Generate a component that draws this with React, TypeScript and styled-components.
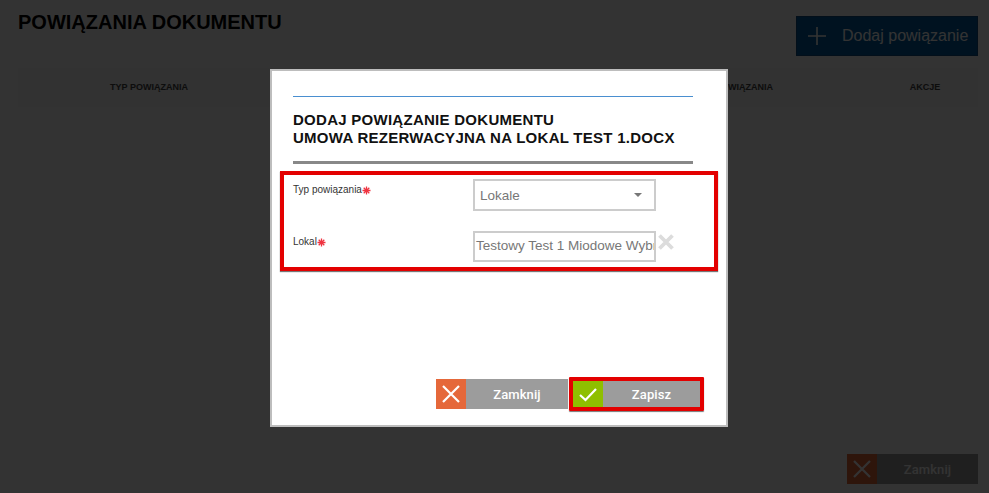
import React from "react";
import styled, { createGlobalStyle } from "styled-components";

const Global = createGlobalStyle`
  html, body { margin: 0; padding: 0; height: 100%; background: #fff; overflow: hidden; }
  #root { height: 100%; }
  * { box-sizing: border-box; }
  body { font-family: "Liberation Sans", Arial, sans-serif; }
`;

const Page = styled.div`
  height: 493px;
  padding: 16px 11px 0 18px;
  display: flex;
  flex-direction: column;
`;
const Header = styled.div`
  display: flex;
  justify-content: space-between;
  align-items: flex-start;
  height: 52px;
`;
const PageTitle = styled.h1`
  margin: 0;
  font-size: 20px;
  line-height: 12px;
  font-weight: 700;
  color: #000;
`;
const AddButton = styled.button`
  width: 182px;
  height: 40px;
  border: 1px solid #0f4d80;
  background: #005c9f;
  color: #fff;
  display: flex;
  align-items: center;
  gap: 15px;
  padding: 0 0 0 10px;
  font-family: inherit;
  font-size: 16px;
`;
const TableHead = styled.div`
  display: grid;
  grid-template-columns: 262px 493px 1fr 106px;
  align-items: center;
  height: 39px;
  background: #f7f7f7;
  padding-bottom: 1px;
`;
const HeadCell = styled.div<{ $align?: string }>`
  font-size: 9px;
  font-weight: 700;
  color: #444;
  text-align: ${(p) => p.$align ?? "center"};
`;
const Footer = styled.div`
  margin-top: auto;
  display: flex;
  justify-content: flex-end;
  padding-bottom: 9px;
`;
const Overlay = styled.div`
  position: fixed;
  inset: 0;
  background: rgba(0, 0, 0, 0.8);
  padding: 69px 0 0 270px;
`;
const Dialog = styled.div`
  width: 458px;
  height: 358px;
  background: #fff;
  border: 2px solid #bdbdbd;
  display: flex;
  flex-direction: column;
  padding: 25px 33px 0 21px;
`;
const BlueRule = styled.div`
  height: 1px;
  background: #4a8fd0;
`;
const DialogTitle = styled.h2`
  margin: 14px 0 0;
  font-size: 15px;
  line-height: 18px;
  font-weight: 700;
  color: #111;
  letter-spacing: 0.27px;
`;
const GreyRule = styled.div`
  height: 3px;
  margin-top: 14px;
  background: #888;
`;
const Highlight = styled.div`
  margin: 7px -25px 0 -13px;
  height: 100px;
  border: 4px solid #e30000;
  box-shadow: 0 1px 1px #777;
  padding: 4px 0 0 9px;
  display: flex;
  flex-direction: column;
  gap: 20px;
`;
const FormRow = styled.div`
  display: grid;
  grid-template-columns: 180px 183px auto;
  align-items: start;
`;
const Label = styled.label`
  font-size: 10px;
  line-height: 12px;
  margin-top: 5px;
  color: #333;
  display: flex;
  align-items: center;
`;
const Star = styled.svg`
  width: 9px;
  height: 9px;
`;
const SelectBox = styled.div`
  height: 32px;
  border: 2px solid #ccc;
  display: flex;
  align-items: center;
  justify-content: space-between;
  padding: 0 12px 0 5px;
  font-size: 13.5px;
  color: #777;
`;
const Caret = styled.span`
  width: 0;
  height: 0;
  border-left: 4px solid transparent;
  border-right: 4px solid transparent;
  border-top: 4px solid #777;
`;
const InputBox = styled.div`
  height: 31px;
  border: 2px solid #ccc;
  padding: 0 0 0 1px;
  font-size: 13.5px;
  line-height: 26px;
  color: #777;
  white-space: nowrap;
  overflow: hidden;
`;
const ClearIcon = styled.svg`
  width: 18px;
  height: 18px;
  margin: 2px 0 0 1px;
`;
const Actions = styled.div`
  margin-top: auto;
  margin-bottom: 14px;
  display: flex;
  justify-content: flex-end;
  align-items: center;
  margin-right: -11px;
  gap: 1px;
`;
const ActionButton = styled.button<{ $w: number; $h?: number }>`
  width: ${(p) => p.$w}px;
  height: ${(p) => p.$h ?? 30}px;
  padding: 0;
  border: 0;
  background: #9c9c9c;
  display: flex;
  align-items: stretch;
  color: #fff;
  font-family: Roboto, "Liberation Sans", sans-serif;
  font-size: 13px;
  font-weight: 500;
  letter-spacing: 0.1px;
`;
const IconTile = styled.span<{ $bg: string }>`
  width: 30px;
  flex: none;
  background: ${(p) => p.$bg};
  display: flex;
  align-items: center;
  justify-content: center;
`;
const ButtonLabel = styled.span`
  flex: 1;
  align-self: center;
  text-align: center;
`;
const RedFrame = styled.div`
  border: 4px solid #e30000;
  box-shadow: 0 1px 1px #777;
  border-radius: 1px;
  display: flex;
`;

const CloseGlyph = () => (
  <svg width="20" height="20" viewBox="0 0 20 20" fill="none" stroke="#fff" strokeWidth="2.2">
    <path d="M2 2 L18 18 M18 2 L2 18" />
  </svg>
);
const CheckGlyph = () => (
  <svg width="20" height="16" viewBox="0 0 20 16" fill="none" stroke="#fff" strokeWidth="2.2">
    <path d="M2 9 L7.5 14 L18 3" />
  </svg>
);
const RequiredStar = () => (
  <Star viewBox="0 0 9 9" fill="none" stroke="#ef3340" strokeWidth="1.3">
    <path d="M4.5 0.5 V8.5 M0.5 4.5 H8.5 M1.7 1.7 L7.3 7.3 M7.3 1.7 L1.7 7.3" />
  </Star>
);

export default function App() {
  return (
    <>
      <Global />
      <Page>
        <Header>
          <PageTitle>POWIĄZANIA DOKUMENTU</PageTitle>
          <AddButton>
            <svg width="20" height="20" viewBox="0 0 20 20" stroke="#fff" strokeWidth="1.6" fill="none">
              <path d="M10 1 V19 M1 10 H19" />
            </svg>
            Dodaj powiązanie
          </AddButton>
        </Header>
        <TableHead>
          <HeadCell>TYP POWIĄZANIA</HeadCell>
          <HeadCell $align="right">NAZWA POWIĄZANIA</HeadCell>
          <HeadCell />
          <HeadCell>AKCJE</HeadCell>
        </TableHead>
        <Footer>
          <ActionButton $w={131}>
            <IconTile $bg="#e5683a"><CloseGlyph /></IconTile>
            <ButtonLabel>Zamknij</ButtonLabel>
          </ActionButton>
        </Footer>
      </Page>
      <Overlay>
        <Dialog>
          <BlueRule />
          <DialogTitle>
            DODAJ POWIĄZANIE DOKUMENTU
            <br />
            UMOWA REZERWACYJNA NA LOKAL TEST 1.DOCX
          </DialogTitle>
          <GreyRule />
          <Highlight>
            <FormRow>
              <Label>Typ powiązania<RequiredStar /></Label>
              <SelectBox>Lokale<Caret /></SelectBox>
            </FormRow>
            <FormRow>
              <Label>Lokal<RequiredStar /></Label>
              <InputBox>Testowy Test 1 Miodowe Wybrzeże</InputBox>
              <ClearIcon viewBox="0 0 18 18" stroke="#dcdcdc" strokeWidth="3.8" fill="none">
                <path d="M2.5 2.5 L15.5 15.5 M15.5 2.5 L2.5 15.5" />
              </ClearIcon>
            </FormRow>
          </Highlight>
          <Actions>
            <ActionButton $w={132}>
              <IconTile $bg="#e5683a"><CloseGlyph /></IconTile>
              <ButtonLabel>Zamknij</ButtonLabel>
            </ActionButton>
            <RedFrame>
              <ActionButton $w={127} $h={26}>
                <IconTile $bg="#8fbf00"><CheckGlyph /></IconTile>
                <ButtonLabel>Zapisz</ButtonLabel>
              </ActionButton>
            </RedFrame>
          </Actions>
        </Dialog>
      </Overlay>
    </>
  );
}
